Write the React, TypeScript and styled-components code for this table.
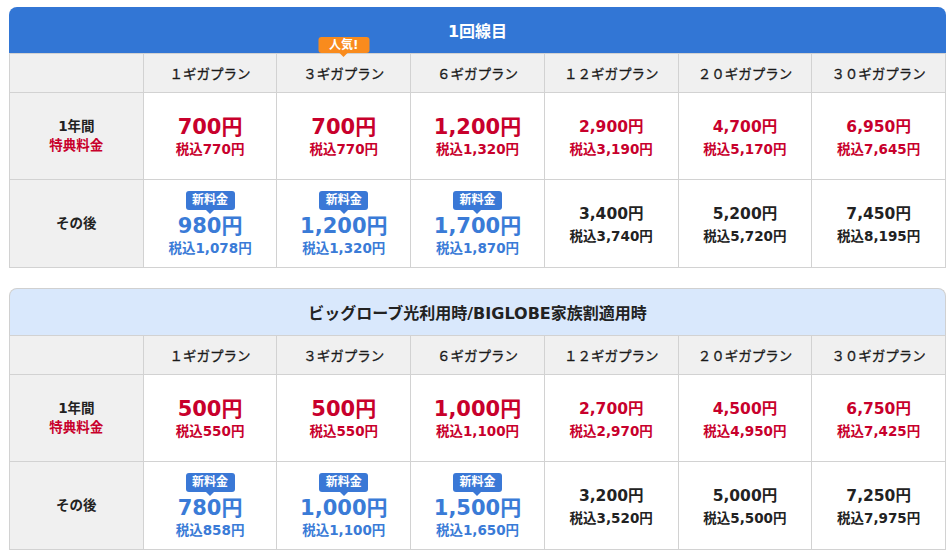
import * as React from 'react'
import styled, { createGlobalStyle } from 'styled-components'

const GlobalStyle = createGlobalStyle`
  * { box-sizing: border-box; }
  body {
    margin: 0;
    background: #fff;
    font-family: "DejaVu Sans", "Noto Sans CJK JP", sans-serif;
    color: #222;
  }
`

const Page = styled.div`
  width: 946px;
  padding: 7px 0 10px 9px;
`

const Section = styled.section`
  width: 937px;
  margin-bottom: 20px;
`

const TitleBar = styled.div<{ $light?: boolean }>`
  display: flex;
  align-items: center;
  justify-content: center;
  height: ${(p) => (p.$light ? '47px' : '46px')};
  border-radius: 8px 8px 0 0;
  font-size: 16px;
  font-weight: bold;
  background: ${(p) => (p.$light ? '#d9e8fc' : '#3276d5')};
  color: ${(p) => (p.$light ? '#222' : '#fff')};
  border: ${(p) => (p.$light ? '1px solid #d0d0d0' : 'none')};
  border-bottom: none;
`

const Grid = styled.div`
  display: grid;
  grid-template-columns: repeat(7, 1fr);
  grid-template-rows: 39px 87px 88px;
  border-left: 1px solid #d2d2d2;
  border-top: 1px solid #d2d2d2;
`

const Cell = styled.div<{ $head?: boolean }>`
  position: relative;
  display: flex;
  flex-direction: column;
  align-items: center;
  justify-content: center;
  border-right: 1px solid #d2d2d2;
  border-bottom: 1px solid #d2d2d2;
  background: ${(p) => (p.$head ? '#f0f0f0' : '#fff')};
  text-align: center;
`

const PlanName = styled.span`
  font-size: 13.5px;
  color: #1a1a1a;
  -webkit-text-stroke: 0.3px #1a1a1a;
`

const RowLabel = styled.div<{ $red?: boolean }>`
  font-size: 13.5px;
  font-weight: bold;
  line-height: 19px;
  color: ${(p) => (p.$red ? '#c8002c' : '#222')};
`

const tone = {
  red: '#c8002c',
  blue: '#3a7bd7',
  dark: '#222',
}

type Tone = keyof typeof tone

const Price = styled.div<{ $tone: Tone; $big?: boolean }>`
  font-size: ${(p) => (p.$big ? '21px' : '15.5px')};
  font-weight: bold;
  line-height: 25px;
  color: ${(p) => tone[p.$tone]};
`

const Tax = styled.div<{ $tone: Tone }>`
  font-size: 13.5px;
  font-weight: bold;
  line-height: 18px;
  color: ${(p) => tone[p.$tone]};
`

const NewBadge = styled.div`
  position: relative;
  width: 49px;
  height: 19px;
  margin-bottom: 4px;
  border-radius: 3px;
  background: #3a78d6;
  color: #fff;
  font-size: 12px;
  font-weight: bold;
  line-height: 19px;

  &::after {
    content: '';
    position: absolute;
    left: 50%;
    bottom: -4px;
    margin-left: -4px;
    border-left: 4px solid transparent;
    border-right: 4px solid transparent;
    border-top: 4px solid #3a78d6;
  }
`

const PopularBadge = styled.div`
  position: absolute;
  top: -17px;
  left: 50%;
  transform: translateX(-50%);
  width: 51px;
  height: 16px;
  border-radius: 3px;
  background: #f98b1d;
  color: #fff;
  font-size: 12px;
  font-weight: bold;
  line-height: 16px;

  &::after {
    content: '';
    position: absolute;
    left: 50%;
    bottom: -4px;
    margin-left: -4px;
    border-left: 4px solid transparent;
    border-right: 4px solid transparent;
    border-top: 4px solid #f98b1d;
  }
`

const plans = ['１ギガプラン', '３ギガプラン', '６ギガプラン', '１２ギガプラン', '２０ギガプラン', '３０ギガプラン']

type Fee = [string, string]

type TableData = {
  title: string
  light?: boolean
  first: Fee[]
  after: Fee[]
}

const tables: TableData[] = [
  {
    title: '1回線目',
    first: [
      ['700円', '税込770円'],
      ['700円', '税込770円'],
      ['1,200円', '税込1,320円'],
      ['2,900円', '税込3,190円'],
      ['4,700円', '税込5,170円'],
      ['6,950円', '税込7,645円'],
    ],
    after: [
      ['980円', '税込1,078円'],
      ['1,200円', '税込1,320円'],
      ['1,700円', '税込1,870円'],
      ['3,400円', '税込3,740円'],
      ['5,200円', '税込5,720円'],
      ['7,450円', '税込8,195円'],
    ],
  },
  {
    title: 'ビッグローブ光利用時/BIGLOBE家族割適用時',
    light: true,
    first: [
      ['500円', '税込550円'],
      ['500円', '税込550円'],
      ['1,000円', '税込1,100円'],
      ['2,700円', '税込2,970円'],
      ['4,500円', '税込4,950円'],
      ['6,750円', '税込7,425円'],
    ],
    after: [
      ['780円', '税込858円'],
      ['1,000円', '税込1,100円'],
      ['1,500円', '税込1,650円'],
      ['3,200円', '税込3,520円'],
      ['5,000円', '税込5,500円'],
      ['7,250円', '税込7,975円'],
    ],
  },
]

const PriceTable: React.FC<{ data: TableData; popular?: boolean }> = ({ data, popular }) => (
  <Section>
    <TitleBar $light={data.light}>{data.title}</TitleBar>
    <Grid>
      <Cell $head />
      {plans.map((name, i) => (
        <Cell $head key={name}>
          {popular && i === 1 && <PopularBadge>人気!</PopularBadge>}
          <PlanName>{name}</PlanName>
        </Cell>
      ))}

      <Cell $head>
        <RowLabel>1年間</RowLabel>
        <RowLabel $red>特典料金</RowLabel>
      </Cell>
      {data.first.map(([price, tax], i) => (
        <Cell key={i}>
          <Price $tone="red" $big={i < 3}>{price}</Price>
          <Tax $tone="red">{tax}</Tax>
        </Cell>
      ))}

      <Cell $head>
        <RowLabel>その後</RowLabel>
      </Cell>
      {data.after.map(([price, tax], i) => {
        const isNew = i < 3
        return (
          <Cell key={i}>
            {isNew && <NewBadge>新料金</NewBadge>}
            <Price $tone={isNew ? 'blue' : 'dark'} $big={isNew}>{price}</Price>
            <Tax $tone={isNew ? 'blue' : 'dark'}>{tax}</Tax>
          </Cell>
        )
      })}
    </Grid>
  </Section>
)

export default function App() {
  return (
    <Page>
      <GlobalStyle />
      <PriceTable data={tables[0]} popular />
      <PriceTable data={tables[1]} />
    </Page>
  )
}
